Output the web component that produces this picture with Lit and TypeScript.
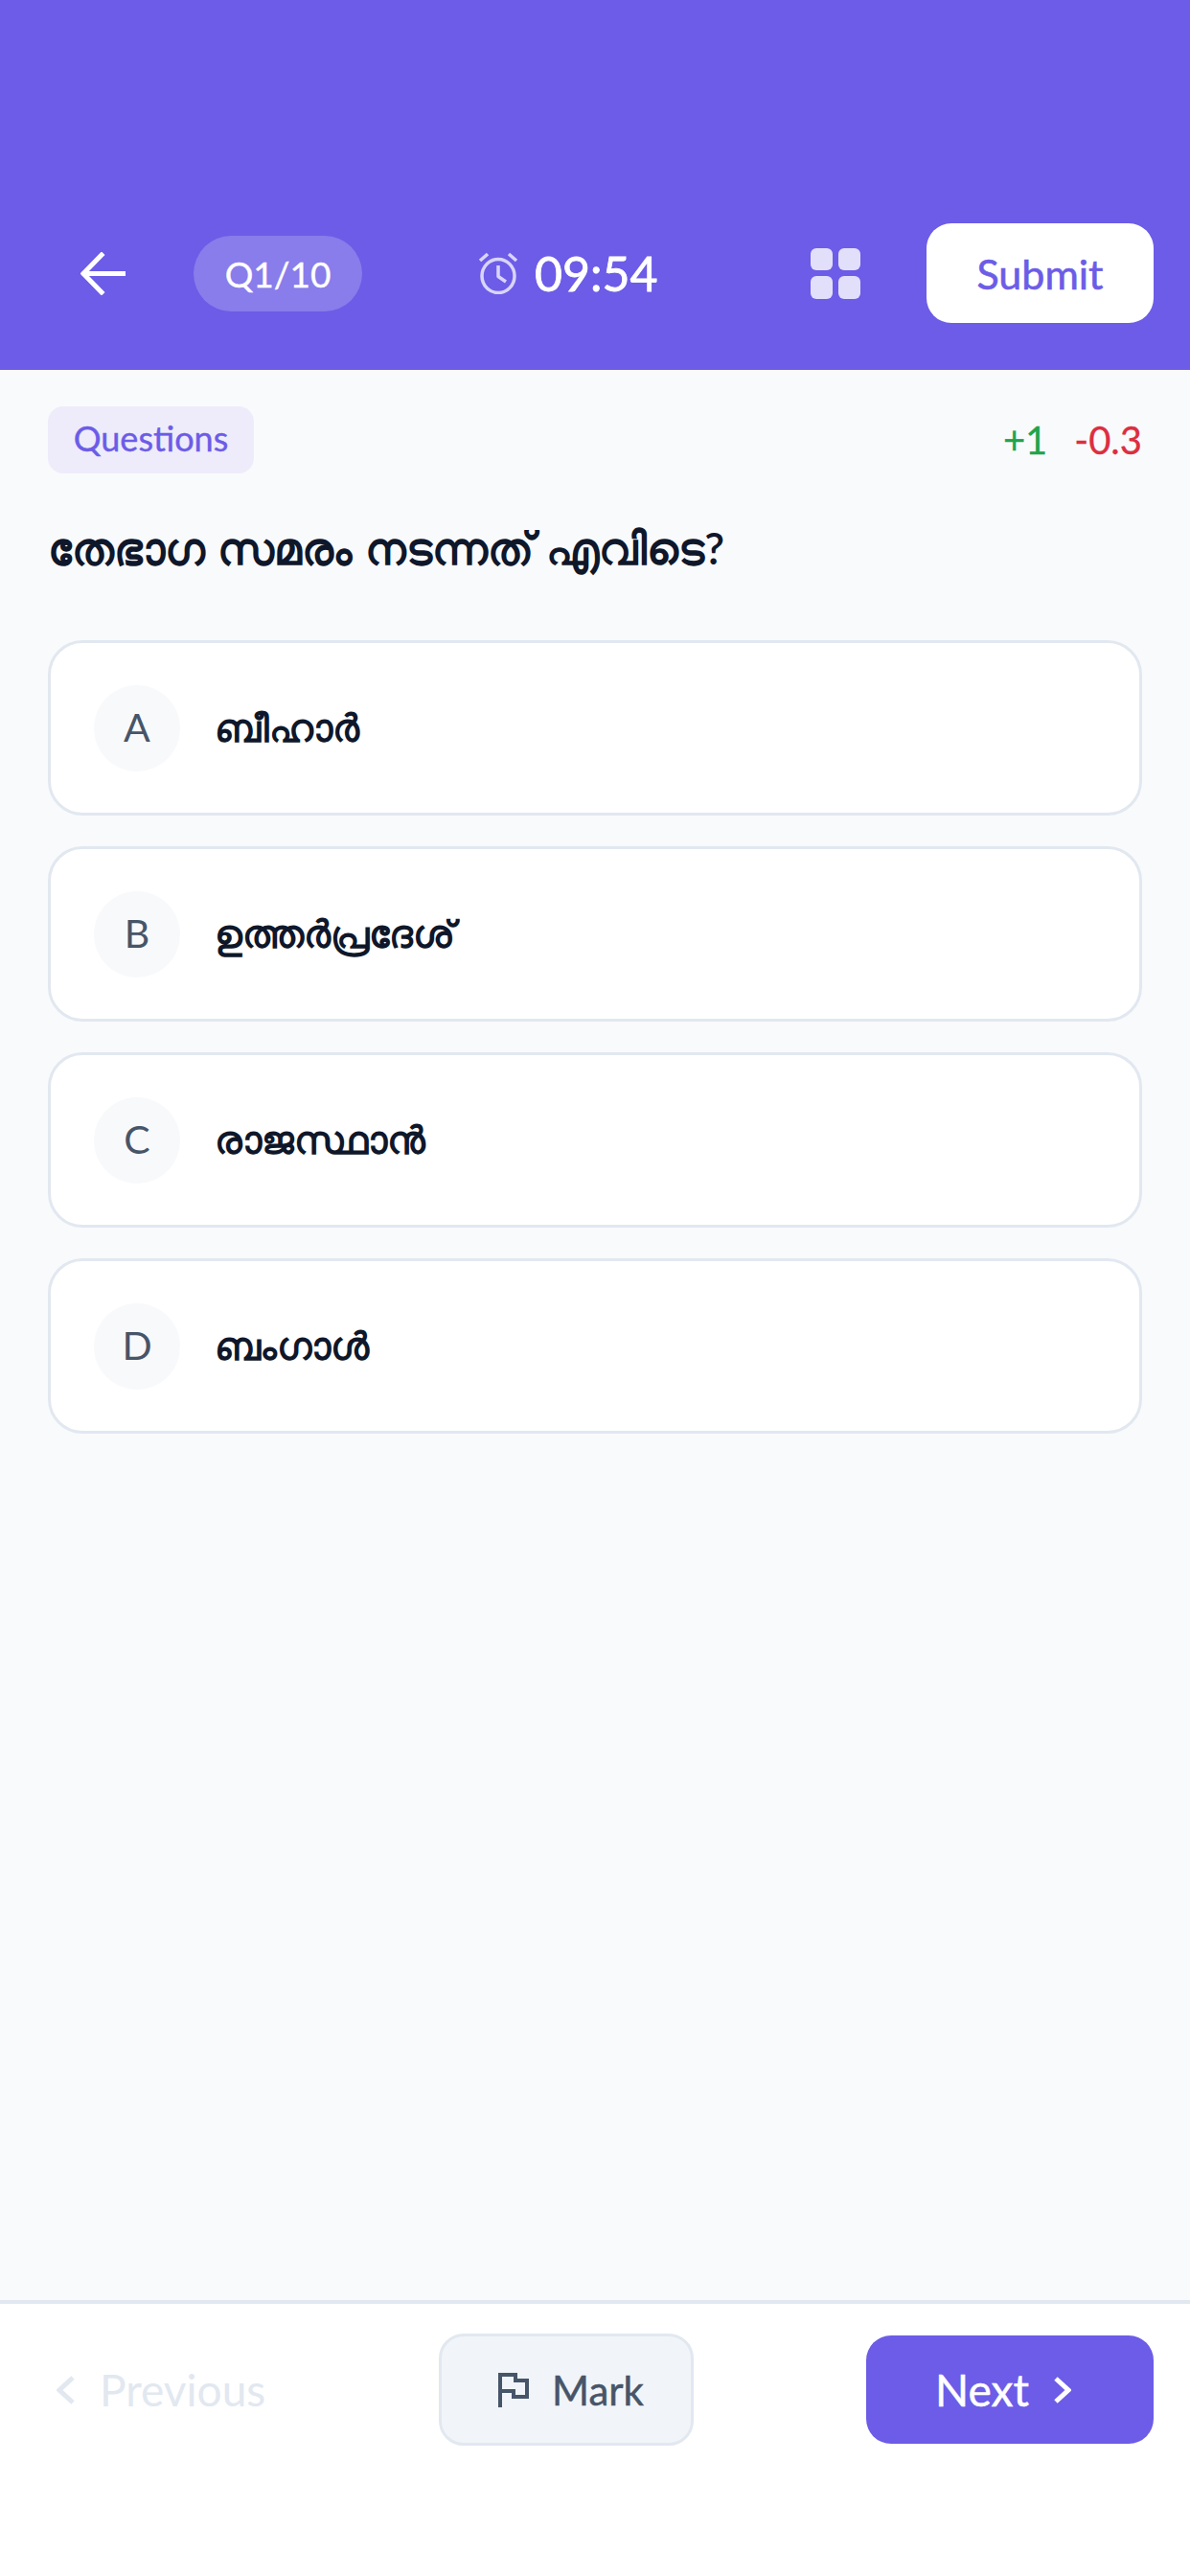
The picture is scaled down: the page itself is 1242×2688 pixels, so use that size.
import { LitElement, html, css } from 'lit';
import { customElement } from 'lit/decorators.js';

const OPTIONS = [
  { key: 'A', text: 'ബീഹാർ' },
  { key: 'B', text: 'ഉത്തർപ്രദേശ്' },
  { key: 'C', text: 'രാജസ്ഥാൻ' },
  { key: 'D', text: 'ബംഗാൾ' },
];

@customElement('app-root')
export class AppRoot extends LitElement {
  static styles = css`
    :host {
      display: flex;
      flex-direction: column;
      width: 1242px;
      height: 2688px;
      background: #f9fafc;
      font-family: Lato, 'Noto Sans', sans-serif;
      overflow: hidden;
    }
    .header {
      height: 386px;
      box-sizing: border-box;
      background: #6c5ce7;
      padding: 233px 38px 49px 84px;
      display: flex;
      align-items: center;
    }
    .back { width: 47px; height: 45px; flex: none; }
    .qpill {
      margin-left: 71px;
      width: 176px;
      height: 79px;
      flex: none;
      border-radius: 40px;
      background: rgba(255, 255, 255, 0.2);
      color: #fff;
      font-size: 37px;
      -webkit-text-stroke: 0.4px #fff;
      display: flex;
      align-items: center;
      justify-content: center;
    }
    .timer {
      margin-left: 121px;
      display: flex;
      align-items: center;
      gap: 17px;
      color: #fff;
      font-size: 50px;
      -webkit-text-stroke: 0.8px #fff;
    }
    .grid {
      margin-left: auto;
      margin-right: 69px;
      width: 52px;
      height: 53px;
      flex: none;
      display: grid;
      grid-template-columns: 1fr 1fr;
      grid-template-rows: 1fr 1fr;
      gap: 6px;
    }
    .grid span { background: #e2dffa; border-radius: 6px; }
    .submit {
      width: 237px;
      height: 104px;
      flex: none;
      border-radius: 26px;
      background: #fff;
      color: #6c5ce7;
      font-size: 43px;
      -webkit-text-stroke: 0.6px #6c5ce7;
      display: flex;
      align-items: center;
      justify-content: center;
    }
    .body { flex: 1; padding: 38px 50px 0; }
    .meta { display: flex; justify-content: space-between; align-items: flex-start; }
    .tag {
      height: 70px;
      width: 215px;
      box-sizing: border-box;
      padding-bottom: 5px;
      border-radius: 16px;
      background: #eeecfa;
      color: #6c5ce7;
      font-size: 36px;
      -webkit-text-stroke: 0.4px #6c5ce7;
      display: flex;
      align-items: center;
      justify-content: center;
    }
    .marks { display: flex; gap: 28px; font-size: 40px; margin-top: 11px; -webkit-text-stroke: 0.3px; }
    .plus { color: #22a34a; }
    .minus { color: #dc2e3f; }
    .question {
      margin: 48px 0 66px;
      font-size: 46px;
      word-spacing: 2px;
      font-weight: 600;
      color: #0f172a;
      line-height: 60px;
    }
    .options { display: flex; flex-direction: column; gap: 32px; }
    .option {
      height: 183px;
      box-sizing: border-box;
      border: 3px solid #e2e8f0;
      border-radius: 36px;
      background: #fff;
      display: flex;
      align-items: center;
      padding-left: 45px;
      gap: 36px;
    }
    .letter {
      width: 90px;
      height: 90px;
      box-sizing: border-box;
      padding-bottom: 2px;
      border-radius: 50%;
      background: #f8f9fb;
      color: #475569;
      font-size: 41px;
      display: flex;
      align-items: center;
      justify-content: center;
    }
    .text { font-size: 40px; font-weight: 600; color: #0f172a; }
    .footer {
      height: 288px;
      box-sizing: border-box;
      background: #fff;
      border-top: 4px solid #e2e8f0;
      padding: 31px 38px 0 59px;
      display: flex;
      align-items: flex-start;
    }
    .prev {
      height: 117px;
      display: flex;
      align-items: center;
      gap: 26px;
      color: #e2e8f0;
      font-size: 46px;
      width: 399px;
    }
    .mark {
      width: 266px;
      height: 117px;
      box-sizing: border-box;
      padding-left: 10px;
      border: 3px solid #e2e8f0;
      border-radius: 26px;
      background: #f1f5f9;
      color: #475569;
      font-size: 42px;
      -webkit-text-stroke: 0.5px #475569;
      display: flex;
      align-items: center;
      justify-content: center;
      gap: 24px;
    }
    .next {
      margin-left: auto;
      margin-top: 2px;
      width: 300px;
      height: 113px;
      box-sizing: border-box;
      padding-right: 14px;
      border-radius: 26px;
      background: #6c5ce7;
      color: #fff;
      font-size: 46px;
      -webkit-text-stroke: 0.5px #fff;
      display: flex;
      align-items: center;
      justify-content: center;
      gap: 26px;
    }
  `;

  render() {
    return html`
      <div class="header">
        <svg class="back" viewBox="0 0 47 45" fill="none" stroke="#fff" stroke-width="5" stroke-linecap="square" stroke-linejoin="miter">
          <path d="M45 22.500H4M22 3L3 22.500 22 42" />
        </svg>
        <div class="qpill">Q1/10</div>
        <div class="timer">
          <svg width="42" height="44" viewBox="0 0 42 44" fill="none" stroke="#d9d4fa" stroke-width="3.500" stroke-linejoin="round">
            <ellipse cx="21" cy="25" rx="17" ry="17.500" />
            <path d="M21 14v11.500l8 5.500M2 9l8-7M40 9l-8-7" />
          </svg>
          <span>09:54</span>
        </div>
        <div class="grid"><span></span><span></span><span></span><span></span></div>
        <div class="submit">Submit</div>
      </div>
      <div class="body">
        <div class="meta">
          <div class="tag">Questions</div>
          <div class="marks"><span class="plus">+1</span><span class="minus">-0.3</span></div>
        </div>
        <div class="question">തേഭാഗ സമരം നടന്നത് എവിടെ?</div>
        <div class="options">
          ${OPTIONS.map(
            o => html`
              <div class="option">
                <div class="letter">${o.key}</div>
                <div class="text">${o.text}</div>
              </div>
            `
          )}
        </div>
      </div>
      <div class="footer">
        <div class="prev">
          <svg width="19" height="30" viewBox="0 0 19 30" fill="none" stroke="#e2e8f0" stroke-width="5"><path d="M17 2L3 15l14 13" /></svg>
          <span>Previous</span>
        </div>
        <div class="mark">
          <svg width="32" height="36" viewBox="0 0 32 36" fill="none" stroke="#475569" stroke-width="4"><path d="M2 36V2h16v6h12v17H16v-6H2" /></svg>
          <span>Mark</span>
        </div>
        <div class="next">
          <span>Next</span>
          <svg width="18" height="28" viewBox="0 0 18 28" fill="none" stroke="#fff" stroke-width="5"><path d="M2 2l13 12L2 26" /></svg>
        </div>
      </div>
    `;
  }
}
